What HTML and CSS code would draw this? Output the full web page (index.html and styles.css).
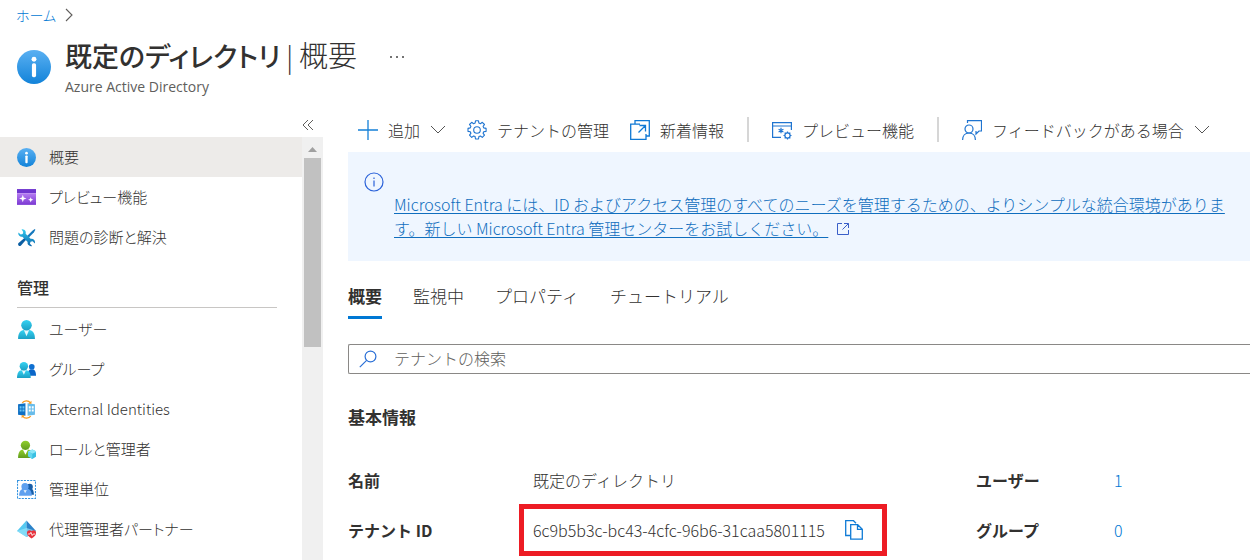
FILE: index.html
```html
<!DOCTYPE html>
<html lang="ja">
<head>
<meta charset="utf-8">
<title>既定のディレクトリ | 概要</title>
<link rel="stylesheet" href="styles.css">
</head>
<body>
<svg class="defs" width="0" height="0" aria-hidden="true">
  <defs>
    <linearGradient id="gBlue" x1="0" y1="0" x2="0" y2="1"><stop offset="0" stop-color="#5ab0f2"/><stop offset="1" stop-color="#1283d9"/></linearGradient>
    <linearGradient id="gCyan" x1="0" y1="0" x2="0" y2="1"><stop offset="0" stop-color="#35d2f2"/><stop offset="1" stop-color="#1b9fc4"/></linearGradient>
    <linearGradient id="gGreen" x1="0" y1="0" x2="0" y2="1"><stop offset="0" stop-color="#92d02c"/><stop offset="1" stop-color="#619c1c"/></linearGradient>
    <linearGradient id="gPurple" x1="0" y1="0" x2="0" y2="1"><stop offset="0" stop-color="#b67cf2"/><stop offset="1" stop-color="#7a38d2"/></linearGradient>
    <linearGradient id="gTool" x1="0" y1="0" x2="0" y2="1"><stop offset="0" stop-color="#32cdf0"/><stop offset="1" stop-color="#0b66ae"/></linearGradient>
    <symbol id="info" viewBox="0 0 18 18"><circle cx="9" cy="9" r="9" fill="url(#gBlue)"/><circle cx="9" cy="4.9" r="1.3" fill="#fff"/><rect x="7.9" y="7" width="2.2" height="7.4" rx=".9" fill="#fff"/></symbol>
    <symbol id="chev" viewBox="0 0 16 9"><path d="M1 1l7 7 7-7" fill="none" stroke="#555" stroke-width="1"/></symbol>
  </defs>
</svg>

<header class="header">
  <nav class="crumbs" aria-label="階層"><a href="#">ホーム</a>
    <svg class="crumb-sep" viewBox="0 0 8 14"><path d="M1 1l6 6-6 6" fill="none" stroke="#605e5c" stroke-width="1.1"/></svg>
  </nav>
  <div class="title-row">
    <svg class="title-icon"><use href="#info"/></svg>
    <div>
      <h1 class="title"><b>既定のディレクトリ</b> | <span class="title-page">概要</span></h1>
      <p class="subtitle">Azure Active Directory</p>
    </div>
    <button class="more" aria-label="その他"><svg viewBox="0 0 16 4"><g fill="#444"><circle cx="2" cy="2" r="1"/><circle cx="8" cy="2" r="1"/><circle cx="14" cy="2" r="1"/></g></svg></button>
  </div>
</header>

<div class="body">
  <aside class="side">
    <button class="collapse" aria-label="折りたたむ"><svg viewBox="0 0 12 12"><path d="M6 1L1 6l5 5M11 1L6 6l5 5" fill="none" stroke="#605e5c"/></svg></button>
    <div class="side-scroll">
      <nav class="menu">
        <a class="item current" href="#"><svg class="ico" viewBox="0 0 18 18"><use href="#info"/></svg>概要</a>
        <a class="item" href="#"><svg class="ico" viewBox="0 0 18 18"><path d="M0 1h18v4H0z" fill="#6f35cf"/><path d="M0 5h18v11H0z" fill="url(#gPurple)"/><path d="M5.500 6.500l.9 2.600 2.600.9-2.600.9-.9 2.600-.9-2.600-2.600-.9 2.600-.9zM13 8.700l.7 1.800 1.800.7-1.800.7-.7 1.800-.7-1.800-1.800-.7 1.800-.7z" fill="#fff"/></svg>プレビュー機能</a>
        <a class="item" href="#"><svg class="ico" viewBox="0 0 18 18"><path d="M16.800 1l.6.6-1.300 2.500-6 6-1.500-1.500 6-6z" fill="#1679bd"/><path d="M7.300 9.300l1.500 1.500-5 5.800c-.7.700-1.700.7-2.300 0s-.7-1.600 0-2.300z" fill="#0b5ea2"/><path d="M4.300 1.200c1.500-.3 3 .4 3.700 1.700.4.800.4 1.700.2 2.500l5 5c1-.3 2.100 0 2.900.8.900.9 1.200 2.200.8 3.400l-2.100-2-2 .5-.5 1.900 2 2c-1.200.400-2.500.1-3.400-.8-.8-.8-1.100-2-.8-3l-5-5c-1 .300-2.100 0-2.900-.8C1.300 6.500 1 5.300 1.400 4.200l2.100 1.900 1.900-.5.5-1.900z" fill="url(#gTool)"/></svg>問題の診断と解決</a>
        <h2 class="group">管理</h2>
        <a class="item" href="#"><svg class="ico" viewBox="0 0 18 18"><path d="M1 18c0-5 2-8.500 5.500-8.500h5C15 9.500 17 13 17 18z" fill="url(#gCyan)"/><path d="M6.500 9.500h5L9 15.500z" fill="#e8f8fc"/><circle cx="9" cy="5" r="5" fill="url(#gCyan)"/></svg>ユーザー</a>
        <a class="item" href="#"><svg class="ico" viewBox="0 0 18 18"><path d="M10 15c0-3.700 1.200-6 3-6h2c2 0 3 2.500 3 6z" fill="#0b66c8"/><circle cx="14" cy="6.500" r="2.700" fill="#0f70d1"/><path d="M0 17c0-4 1.500-7.200 4.300-7.200h4.400C11.500 9.800 13 13 13 17z" fill="url(#gCyan)"/><path d="M4.500 9.800h4L6.500 14z" fill="#e8f8fc"/><circle cx="6.500" cy="6" r="4" fill="url(#gCyan)"/></svg>グループ</a>
        <a class="item" href="#"><svg class="ico" viewBox="0 0 18 18"><path d="M1 4l7-1v12l-7-1z" fill="#0f70c4"/><path d="M10 3l7 1v10l-7 1z" fill="#68bcea"/><path d="M2.500 6h1.800v2H2.500zM5.200 6H7v2H5.200zM2.500 9h1.800v2H2.500zM5.200 9H7v2H5.200z" fill="#66c6f4"/><path d="M11.200 6H13v2h-1.800zM14 6h1.800v2H14zM11.200 9H13v2h-1.800zM14 9h1.800v2H14z" fill="#fff"/><path d="M5 2.700C6.500.300 11 .100 12.500 2.500M13 15.200c-1.500 2.500-6 2.700-7.500.2" fill="none" stroke="#f79a1d" stroke-width="1.200"/><path d="M13.700.600v3h-3zM4.400 17.400v-3h3z" fill="#f79a1d"/></svg>External Identities</a>
        <a class="item" href="#"><svg class="ico" viewBox="0 0 18 18"><path d="M1 17c0-4.500 1.500-8 4.500-8h5c3 0 4.500 3.500 4.500 8z" fill="url(#gGreen)"/><path d="M5.500 9h5L8 14z" fill="#fff"/><circle cx="8" cy="5" r="4.400" fill="url(#gGreen)"/><path d="M14.500 9l4 2v4.500l-4 2.500-4-2.500V11z" fill="#38bfe2"/><path d="M14.500 9l4 2-4 2-4-2z" fill="#8ce7f7"/><path d="M10.500 11l4 2v5l-4-2.500z" fill="#63d6ef"/></svg>ロールと管理者</a>
        <a class="item" href="#"><svg class="ico" viewBox="0 0 18 18"><rect x=".5" y=".5" width="17" height="17" fill="none" stroke="#3292df" stroke-dasharray="2 1"/><path d="M9 14c0-4 1.500-6 3-6h1c2 0 3 2.500 3 6z" fill="#175ea9"/><circle cx="12" cy="6.500" r="3" fill="#175ea9"/><path d="M2 15c0-4 1.500-6.500 4-6.500h4c2.500 0 4 2.500 4 6.500z" fill="#5ea0ef"/><path d="M6 9h3.500l-1.800 3.500z" fill="#e5f1fc"/><circle cx="7.600" cy="6.300" r="3.400" fill="#5ea0ef"/></svg>管理単位</a>
        <a class="item" href="#"><svg class="ico" viewBox="0 0 18 18"><path d="M9 .5L0 10.500 9 16z" fill="#55c9f1"/><path d="M9 .5l9 10L9 16z" fill="#2b82c9"/><path d="M0 10.500l9-3 9 3L9 16z" fill="#9be6fa" opacity=".65"/><path d="M13.800 17.500C6 13 10.500 7.500 13.800 10.500c3.200-3 7.800 2.500 0 7z" fill="#e8323c"/><path d="M10.500 13.300h1.700l1-1.600 1.200 3 .9-1.400h2" fill="none" stroke="#fff" stroke-width=".8"/></svg>代理管理者パートナー</a>
      </nav>
      <div class="bar" aria-hidden="true">
        <svg class="bar-up" viewBox="0 0 9 5"><path d="M0 5l4.500-5L9 5z" fill="#a0a0a0"/></svg>
        <div class="thumb"></div>
      </div>
    </div>
  </aside>

  <main class="main">
    <div class="toolbar">
      <button class="tool add"><svg class="tico" viewBox="0 0 20 20"><path d="M10 0v20M0 10h20" stroke="#1480d8" stroke-width="1.300"/></svg>追加<svg class="chev"><use href="#chev"/></svg></button>
      <button class="tool manage"><svg class="tico" viewBox="0 0 20 20" fill="none" stroke="#1f74d0" stroke-width="1.100"><path d="M8.500 .8h3l.4 2.300 1.500.6 1.900-1.400 2.200 2.200-1.400 1.900.6 1.500 2.400.5v3l-2.400.4-.6 1.500 1.400 1.900-2.200 2.200-1.900-1.400-1.500.6-.4 2.400h-3l-.4-2.400-1.500-.6-1.900 1.400-2.200-2.200 1.400-1.900-.6-1.500-2.300-.4v-3l2.300-.5.6-1.500-1.400-1.900 2.200-2.200 1.900 1.400 1.500-.6z" stroke-linejoin="round"/><circle cx="10" cy="10" r="3.300"/></svg>テナントの管理</button>
      <button class="tool news"><svg class="tico" viewBox="0 0 20 20" fill="none" stroke="#0f78d4" stroke-width="1.300"><path d="M10 4.200H.7v15.100H16V14M5 4.200V.7h14.300V16H16M8.500 12.500L15 6M9.500 5.500h6v6"/></svg>新着情報</button>
      <span class="sep"></span>
      <button class="tool preview"><svg class="tico" viewBox="0 0 20 20" fill="none" stroke="#1f74d0" stroke-width="1.200"><path d="M9 17.400H.6V2.600h18.800V10M.6 6h18.800"/><circle cx="15.500" cy="15.500" r="2.600"/><path d="M15.500 11.500v1.400M15.500 18.100v1.400M11.500 15.500h1.400M18.100 15.500h1.400M12.700 12.700l1 1M17.300 17.300l1 1M18.300 12.700l-1 1M13.700 17.300l-1 1"/><path d="M9 7.800v5.400M6.600 9.200l4.800 2.700M11.400 9.200l-4.800 2.700"/></svg>プレビュー機能</button>
      <span class="sep"></span>
      <button class="tool feedback"><svg class="tico" viewBox="0 0 20 20" fill="none" stroke="#1f74d0" stroke-width="1.200"><circle cx="7" cy="9" r="4"/><path d="M.6 20c0-4 2.500-7 6.400-7s6.400 3 6.400 7M5.500 3V.7h14V11h-2.500l-3 3v-3"/></svg>フィードバックがある場合<svg class="chev"><use href="#chev"/></svg></button>
    </div>

    <section class="banner">
      <svg class="banner-ico" viewBox="0 0 20 20"><circle cx="10" cy="10" r="9" fill="none" stroke="#2b62d9" stroke-width="1.200"/><path d="M10 8.500v6M10 5.500V7" stroke="#2b62d9" stroke-width="1.200"/></svg>
      <p class="banner-text"><a href="#">Microsoft Entra には、ID およびアクセス管理のすべてのニーズを管理するための、よりシンプルな統合環境がありま<br>す。新しい Microsoft Entra 管理センターをお試しください。</a><svg class="ext" viewBox="0 0 12 12" fill="none" stroke="#3a5fc8"><path d="M5 .5H.5v11h11V7M7 .5h4.500V5M11.500 .5L5.500 6.500"/></svg></p>
    </section>

    <nav class="tabs">
      <a class="tab on" href="#">概要</a><a class="tab" href="#">監視中</a><a class="tab" href="#">プロパティ</a><a class="tab" href="#">チュートリアル</a>
    </nav>

    <label class="search">
      <svg viewBox="0 0 18 18" fill="none" stroke="#2a6fd6" stroke-width="1.200"><circle cx="11.500" cy="6.500" r="5.400"/><path d="M7.600 10.400L.8 17.200"/></svg>
      <input type="text" placeholder="テナントの検索" aria-label="テナントの検索">
    </label>

    <h2 class="section">基本情報</h2>
    <dl class="facts">
      <dt>名前</dt><dd>既定のディレクトリ</dd>
      <dt>ユーザー</dt><dd><a href="#">1</a></dd>
      <dt>テナント ID</dt>
      <dd><span class="marked">6c9b5b3c-bc43-4cfc-96b6-31caa5801115<button class="copy" aria-label="コピー"><svg viewBox="0 0 18 20" fill="none" stroke="#0f7bd6" stroke-width="1.300"><path d="M5 15.500H.7V.7h7.800l2.500 2.500M5.700 4.700h7l4.600 4.500v10H5.700zM12.500 4.700v4.700h4.800"/></svg></button></span></dd>
      <dt>グループ</dt><dd><a href="#">0</a></dd>
    </dl>
  </main>
</div>
</body>
</html>
```
FILE: styles.css
```css
* { box-sizing: border-box; }
body {
  margin: 0;
  min-height: 100vh;
  display: flex;
  flex-direction: column;
  background: #fff;
  color: #323130;
  font: 16px/24px "Noto Sans CJK JP", sans-serif;
  font-weight: 300;
  overflow-x: hidden;
}
.defs { position: absolute; }
h1, h2, p, dl, dd { margin: 0; }
a { color: #0078d4; text-decoration: none; }
button { border: 0; padding: 0; background: none; font: inherit; color: inherit; }
svg { display: block; flex: none; }

.header { padding: 3px 16px 0; height: 112px; }
.crumbs { display: flex; align-items: center; gap: 9px; font-size: 14px; font-feature-settings: "palt"; }
.crumb-sep { width: 8px; height: 14px; }
.title-row { display: flex; align-items: flex-start; padding-top: 9px; }
.title-icon { width: 34px; height: 34px; margin: 14px 14px 0 1px; }
.title { font-size: 27px; line-height: 36px; font-weight: 300; font-feature-settings: "palt"; }
.title b { font-weight: 500; }
.title-page { font-size: 29px; }
.subtitle { font: 14px/26px "Open Sans", sans-serif; color: #605e5c; }
.more { margin: 19px 0 0 32px; }
.more svg { width: 16px; height: 4px; }

.body { flex: 1; display: flex; }
.side { width: 323px; flex: none; display: flex; flex-direction: column; }
.collapse { height: 25px; align-self: flex-end; padding-right: 9px; }
.collapse svg { width: 12px; height: 12px; }
.side-scroll { flex: 1; display: flex; }
.menu { flex: 1; }
.item {
  display: flex;
  align-items: center;
  gap: 13px;
  height: 40px;
  padding-left: 17px;
  font-size: 15px;
  color: #323130;
  font-feature-settings: "palt";
}
.item.current { background: #edebe9; }
.ico { width: 19px; height: 19px; }
.group {
  margin: 10px 25px 1px 17px;
  height: 41px;
  line-height: 41px;
  font-size: 16px;
  font-weight: 500;
  border-bottom: 1px solid #c8c6c4;
}
.bar { width: 21px; background: #f0f0f0; padding: 10px 2px 0; }
.bar-up { width: 9px; height: 5px; margin: 0 auto 6px; }
.thumb { height: 189px; background: #c1c1c1; }

.main { flex: 1; min-width: 0; padding-left: 25px; }
.toolbar { display: flex; align-items: center; height: 40px; padding: 0 0 5px 10px; white-space: nowrap; }
.tool { display: flex; align-items: center; gap: 10px; }
.tico { width: 20px; height: 20px; }
.chev { width: 16px; height: 9px; }
.manage, .news { margin-left: 21px; }
.sep { width: 2px; height: 25px; margin: 0 23px; background: #d6d6d6; }

.banner { height: 109px; background: #eff6ff; padding: 20px 0 0 16px; }
.banner-ico { width: 20px; height: 20px; }
.banner-text { padding-left: 30px; white-space: nowrap; }
.banner-text a { color: #106ebe; text-decoration: underline; text-underline-offset: 2px; }
.ext { display: inline-block; width: 12px; height: 12px; margin-left: 9px; }

.tabs { display: flex; gap: 31px; padding-top: 22px; }
.tab { height: 36px; line-height: 26px; font-size: 17px; color: #323130; }
.tab.on { font-weight: 700; border-bottom: 3px solid #0078d4; }

.search {
  display: flex;
  align-items: center;
  gap: 17px;
  height: 30px;
  margin-top: 25px;
  padding-left: 10px;
  border: 1px solid #8a8886;
  border-right: 0;
  border-radius: 2px 0 0 2px;
}
.search svg { width: 18px; height: 18px; }
.search input { flex: 1; min-width: 0; border: 0; padding: 0 0 2px; outline: 0; font: inherit; background: none; }
.search input::placeholder { color: #605e5c; opacity: 1; }

.section { margin-top: 31px; font-size: 17px; line-height: 24px; font-weight: 700; }
.facts {
  display: grid;
  grid-template-columns: 185px 443px 138px 1fr;
  grid-auto-rows: 50px;
  align-items: center;
  margin-top: 26px;
}
.facts dt { font-weight: 700; }
.marked {
  display: inline-flex;
  align-items: center;
  gap: 20px;
  height: 24px;
  padding-right: 10px;
  outline: 5px solid #ed1c24;
  outline-offset: 9px;
}
.copy svg { width: 18px; height: 20px; }
```
